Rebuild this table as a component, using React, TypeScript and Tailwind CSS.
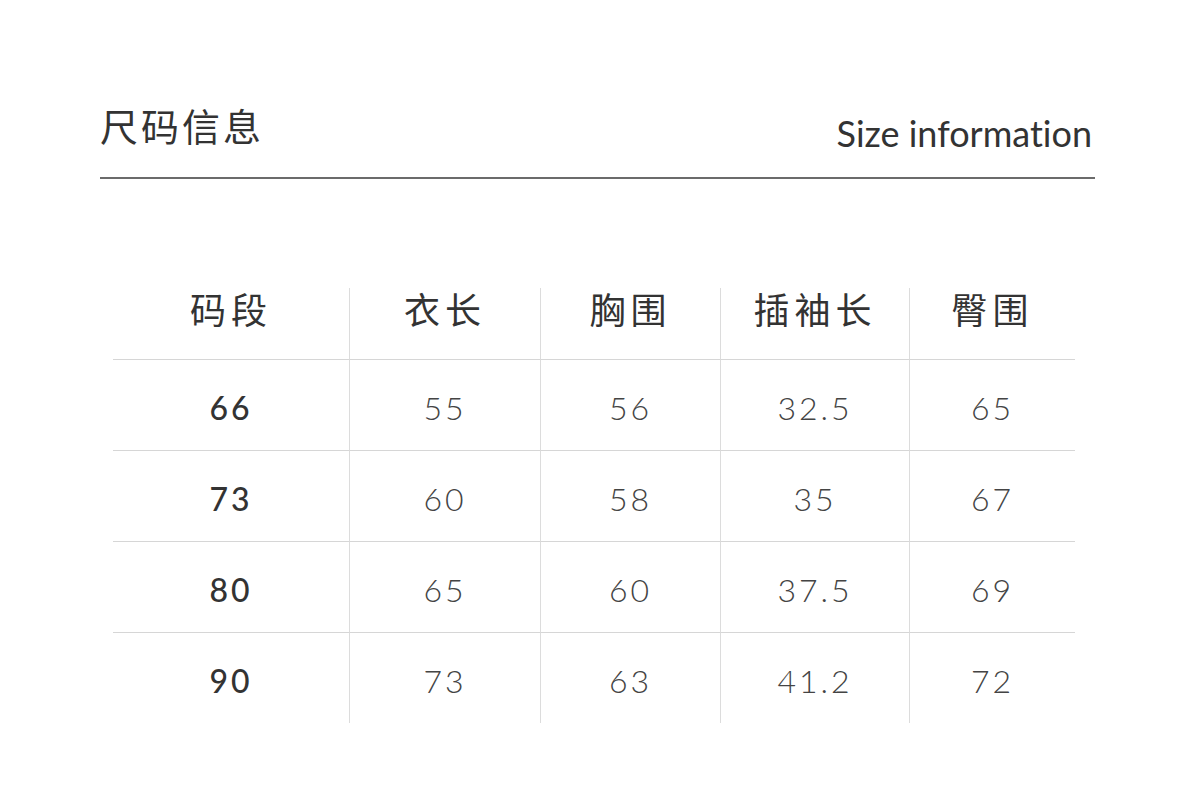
import React from 'react';

const HEADERS = ['码段', '衣长', '胸围', '插袖长', '臀围'];
const ROWS = [
  ['66', '55', '56', '32.5', '65'],
  ['73', '60', '58', '35', '67'],
  ['80', '65', '60', '37.5', '69'],
  ['90', '73', '63', '41.2', '72'],
];

const cjk = "font-['Noto_Sans_CJK_SC','Noto_Sans',sans-serif]";
const num = "font-['Lato','Noto_Sans',sans-serif] [font-variant-ligatures:none]";

export default function App() {
  return (
    <div className="w-[1200px] h-[792px] bg-white text-[#333]">
      {/* Title */}
      <div className="ml-[100px] w-[995px] pt-[97px]">
        <div className="flex items-end justify-between border-b-2 border-[#6b6b6b] pb-[24px]">
          <h1 className={`${cjk} text-[38px] leading-[56px] tracking-[3px] text-[#333]`}>尺码信息</h1>
          <span className={`${num} mr-[3px] text-[36px] leading-[40px] text-[#333]`}>Size information</span>
        </div>
      </div>

      {/* Table */}
      <div className="ml-[113px] mt-[109px] grid w-[962px] grid-cols-[236px_191px_180px_189px_166px]">
        {HEADERS.map((h, i) => (
          <div
            key={h}
            className={`flex h-[71px] items-start justify-center pt-[2px] ${i > 0 ? 'border-l border-[#dcdcdc]' : ''}`}
          >
            <span className={`${cjk} text-[36px] leading-[36px] tracking-[5px] text-[#333]`}>{h}</span>
          </div>
        ))}
        {ROWS.map((row) =>
          row.map((v, i) => (
            <div
              key={row[0] + '-' + i}
              className={`flex h-[91px] items-center justify-center border-t border-[#d6d6d6] pt-[6px] ${i > 0 ? 'border-l border-l-[#dcdcdc]' : ''}`}
            >
              <span
                className={`${num} text-[32px] leading-[40px] tracking-[3px] ${i === 0 ? 'font-medium text-[#333]' : 'font-light text-[#444]'}`}
              >
                {v}
              </span>
            </div>
          ))
        )}
      </div>
    </div>
  );
}
